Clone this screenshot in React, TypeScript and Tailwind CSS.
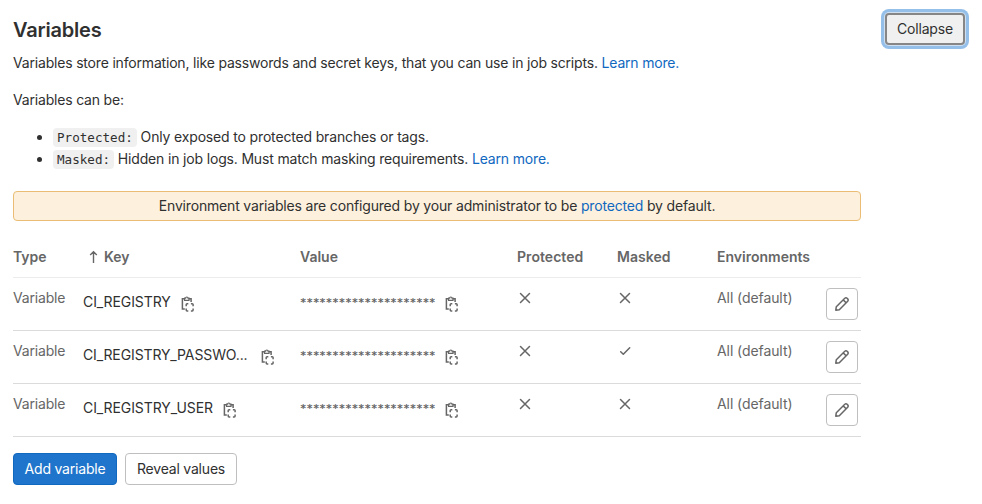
import React from 'react';

type Row = { key: string; masked: boolean; truncated?: boolean };

const rows: Row[] = [
  { key: 'CI_REGISTRY', masked: false },
  { key: 'CI_REGISTRY_PASSWO...', masked: true, truncated: true },
  { key: 'CI_REGISTRY_USER', masked: false },
];

const columns = 'grid grid-cols-[70px_217px_217px_100px_100px_109px_35px]';

function CopyIcon() {
  return (
    <svg className="block h-4 w-4 shrink-0" viewBox="0 0 16 16" fill="none" stroke="#666" strokeWidth="1.5">
      <path d="M4.8 12.9H2.4V2.7h2.3M8.8 2.7h2.3V6" />
      <path d="M4.6 4.3V2.2h1a1.2 1.2 0 0 1 2.4 0h1v2.1Z" strokeWidth="1.2" />
      <path d="M6.2 10.2V8.6q0-.9.9-.9h1.2M10.9 7.7h1.3q.9 0 .9.9v1.6M13.1 12.5v1.6q0 .9-.9.9h-1.3M8.3 15H7.1q-.9 0-.9-.9v-1.6" strokeWidth="1.5" />
    </svg>
  );
}

function CrossIcon() {
  return (
    <svg className="block h-4 w-4" viewBox="0 0 16 16" fill="none" stroke="#666" strokeWidth="1.5" strokeLinecap="round">
      <path d="m3.5 3.5 9 9M12.5 3.5l-9 9" />
    </svg>
  );
}

function CheckIcon() {
  return (
    <svg className="block h-4 w-4" viewBox="0 0 16 16" fill="none" stroke="#666" strokeWidth="1.5" strokeLinecap="round" strokeLinejoin="round">
      <path d="m3.7 8.8 2.6 2.5 6.4-6.5" />
    </svg>
  );
}

function PencilIcon() {
  return (
    <svg className="block h-4 w-4" viewBox="0 0 16 16" fill="none" stroke="#666" strokeWidth="1.5" strokeLinejoin="round">
      <path d="m1.8 14.2.5-3.5 8.5-8.4a1.6 1.6 0 0 1 2.3 0l.6.6a1.6 1.6 0 0 1 0 2.3l-8.4 8.5ZM9.2 3.9l2.9 2.9" />
    </svg>
  );
}

export default function App() {
  return (
    <div className="flex h-[504px] w-[982px] items-start justify-between bg-white pl-[13px] pr-[17px] font-['Inter',sans-serif] text-[14px] leading-5 tracking-[-0.185px] text-[#303030]">
      <main className="w-[848px] whitespace-nowrap">
        <h2 className="mt-4 text-[20px] font-semibold leading-7 tracking-[-0.2px]">Variables</h2>
        <p className="mt-[9px]">
          Variables store information, like passwords and secret keys, that you can use in job scripts.{' '}
          <a className="text-[#1068bf]">Learn more.</a>
        </p>
        <p className="mt-[17px]">Variables can be:</p>
        <ul className="mt-4 list-disc pl-10 leading-[22px]">
          <li className="h-[22px] tracking-[-0.16px]">
            <code className="rounded bg-[#f0f0f0] px-1 py-0.5 font-['DejaVu_Sans_Mono',monospace] text-[12.6px] tracking-normal">Protected:</code>{' '}
            Only exposed to protected branches or tags.
          </li>
          <li className="h-[22px] tracking-[-0.17px]">
            <code className="rounded bg-[#f0f0f0] px-1 py-0.5 font-['DejaVu_Sans_Mono',monospace] text-[12.6px] tracking-normal">Masked:</code>{' '}
            Hidden in job logs. Must match masking requirements. <a className="text-[#1068bf]">Learn more.</a>
          </li>
        </ul>
        <div className="mt-[21px] flex h-[30px] items-center justify-center rounded border border-[#e9be74] bg-[#fdf1dd]">
          <p className="tracking-[-0.17px]">
            Environment variables are configured by your administrator to be <a className="text-[#1068bf]">protected</a> by default.
          </p>
        </div>
        <div className="mt-4 text-[#666]">
          <div className={`${columns} h-[41px] items-center border-b border-[#ececec] font-semibold tracking-normal`}>
            <span>Type</span>
            <span className="flex items-center pl-[5px]">
              <svg className="mr-1 h-4 w-3" viewBox="0 0 12 16" fill="none" stroke="#666" strokeWidth="1.4">
                <path d="M5.5 14V3M2.2 6l3.3-3.3L8.8 6" />
              </svg>
              Key
            </span>
            <span>Value</span>
            <span className="tracking-[0.05px]">Protected</span>
            <span className="tracking-[0.05px]">Masked</span>
            <span>Environments</span>
          </div>
          {rows.map((row) => (
            <div key={row.key} className={`${columns} h-[53px] items-start border-b border-[#dbdbdb] pt-2.5`}>
              <span>Variable</span>
              <div className="flex items-start pt-1">
                <span className={`tracking-[-0.09px] text-[#303030] ${row.truncated ? 'w-[168px] tracking-[-0.12px]' : ''}`}>{row.key}</span>
                <span className="ml-[9px] mt-1"><CopyIcon /></span>
              </div>
              <div className="flex items-start pt-1">
                <span className="pt-px font-['DejaVu_Sans_Mono',monospace] text-[10.7px] font-bold tracking-[0.02px]">*********************</span>
                <span className="ml-2 mt-1"><CopyIcon /></span>
              </div>
              <span className="mt-0.5"><CrossIcon /></span>
              <span className="mt-0.5">{row.masked ? <CheckIcon /> : <CrossIcon />}</span>
              <span className="tracking-[-0.08px]">All (default)</span>
              <button className="flex h-8 w-8 items-center justify-center rounded border border-[#bfbfbf] bg-white"><PencilIcon /></button>
            </div>
          ))}
        </div>
        <div className="mt-4 flex gap-2 tracking-[-0.2px]">
          <button className="h-8 w-[104px] rounded border border-[#1068bf] bg-[#1f75cb] text-white">Add variable</button>
          <button className="h-8 w-28 rounded border border-[#bfbfbf] bg-white">Reveal values</button>
        </div>
      </main>
      <button className="mt-[13px] h-8 w-20 rounded border-2 border-[#868686] bg-[#f0f0f0] shadow-[0_0_0_1px_#cfdff0,0_0_0_4px_#94bfe9]">Collapse</button>
    </div>
  );
}
